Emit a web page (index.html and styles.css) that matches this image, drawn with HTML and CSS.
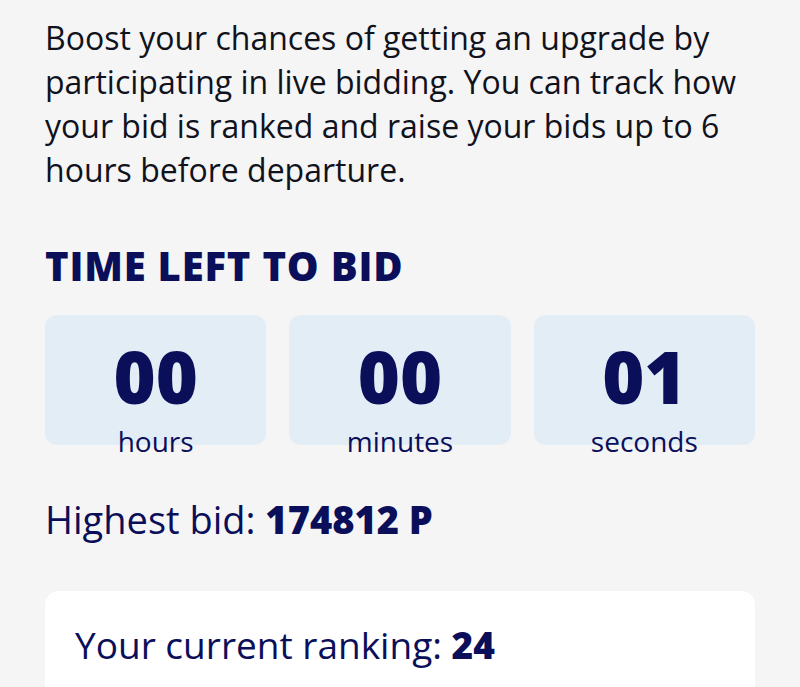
FILE: index.html
```html
<!DOCTYPE html>
<html lang="en">
<head>
    <meta charset="UTF-8">
    <meta name="viewport" content="width=device-width, initial-scale=1.0">
    <title>Live bidding</title>
    <link rel="stylesheet" href="styles.css">
</head>
<body>
    <div class="container">
        <p class="intro">Boost your chances of getting an upgrade by participating in live bidding. You can track how your bid is ranked and raise your bids up to 6 hours before departure.</p>

        <h2 class="section-title">TIME LEFT TO BID</h2>

        <div class="countdown">
            <div class="time-box">
                <span class="time-value">00</span>
                <span class="time-label">hours</span>
            </div>
            <div class="time-box">
                <span class="time-value">00</span>
                <span class="time-label">minutes</span>
            </div>
            <div class="time-box">
                <span class="time-value">01</span>
                <span class="time-label">seconds</span>
            </div>
        </div>

        <p class="highest-bid">Highest bid: <strong>174812 P</strong></p>

        <div class="ranking-card">
            <p class="ranking">Your current ranking: <strong>24</strong></p>
        </div>
    </div>
</body>
</html>
```

FILE: styles.css
```css
body {
    font-family: 'Open Sans', sans-serif;
    background-color: #f5f5f6;
    margin: 0;
    color: #0b0f5a;
    overflow: hidden;
}

.container {
    padding: 16px 45px 0;
}

.intro {
    margin: 0;
    font-size: 32px;
    line-height: 44px;
    color: #10121c;
}

.section-title {
    margin: 51px 0 0;
    font-size: 40px;
    font-weight: 800;
    letter-spacing: 0.8px;
    line-height: 46px;
}

.countdown {
    display: grid;
    grid-template-columns: repeat(3, 1fr);
    gap: 23px;
    margin-top: 26px;
}

.time-box {
    height: 130px;
    background-color: #e3edf6;
    border-radius: 12px;
    display: flex;
    flex-direction: column;
    align-items: center;
}

.time-value {
    margin-top: 18px;
    font-size: 72px;
    font-weight: 800;
    line-height: 86px;
}

.time-label {
    margin-top: 4px;
    font-size: 28px;
    line-height: 36px;
}

.highest-bid {
    margin: 52px 0 0;
    font-size: 38px;
    line-height: 44px;
}

.highest-bid strong,
.ranking strong {
    font-weight: 800;
}

.ranking-card {
    margin-top: 50px;
    background-color: #fff;
    border-radius: 14px;
    padding: 32px 30px 40px;
}

.ranking {
    margin: 0;
    font-size: 37px;
    line-height: 44px;
}
```
